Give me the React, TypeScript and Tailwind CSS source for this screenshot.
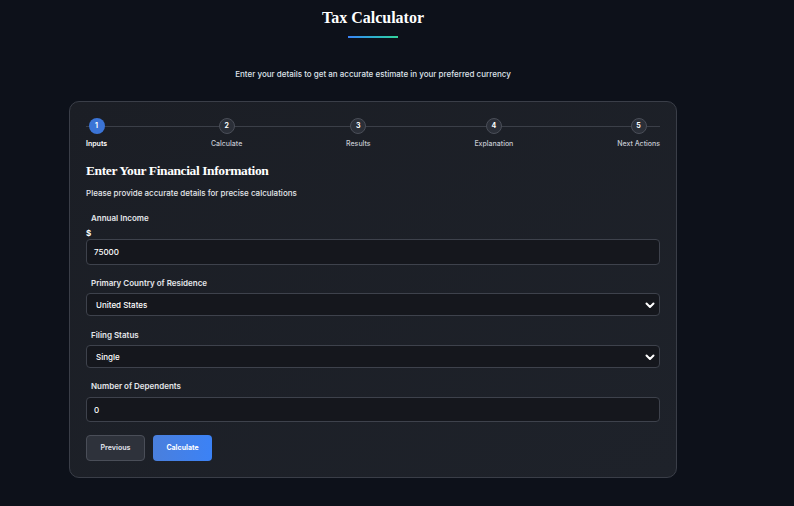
import React from "react";

const steps = ["Inputs", "Calculate", "Results", "Explanation", "Next Actions"];

function Chevron() {
  return (
    <svg width="12" height="12" viewBox="0 0 24 24" fill="none" stroke="#ffffff" strokeWidth="4" strokeLinecap="round" strokeLinejoin="round">
      <polyline points="5 9 12 16 19 9" />
    </svg>
  );
}

export default function App() {
  return (
    <div className="min-h-[506px] w-full bg-[#0d111a] text-white" style={{ fontFamily: "Inter, 'Noto Sans', sans-serif" }}>
      <div className="ml-[69px] w-[608px] flex flex-col items-center pt-[8px]">
        <h1 className="text-[16px] leading-[20px] font-bold text-white" style={{ fontFamily: "'Liberation Serif', serif" }}>
          Tax Calculator
        </h1>
        <div className="mt-[8px] h-[2px] w-[50px] bg-gradient-to-r from-[#3b82f6] to-[#34d399]" />
        <p className="mt-[30px] text-[8px] leading-[12px] text-[#dfe3ea] font-medium">
          Enter your details to get an accurate estimate in your preferred currency
        </p>
        <div className="mt-[21px] w-full rounded-[10px] border border-[#3a3e48] bg-gradient-to-br from-[#1b1e25] to-[#1e222a] px-4 pt-[16px] pb-[16px]">
          <div className="relative flex justify-between items-start">
            <div className="absolute left-0 right-0 top-[8px] h-px bg-[#3b3f48]" />
            {steps.map((s, i) => (
              <div key={s} className="relative flex flex-col items-center">
                <div
                  className={
                    i === 0
                      ? "w-[16px] h-[16px] rounded-full bg-[#3b74d6] flex items-center justify-center text-[7px] font-bold text-white"
                      : "w-[16px] h-[16px] rounded-full bg-[#2b2f38] border border-[#4a4e58] flex items-center justify-center text-[7px] font-bold text-white"
                  }
                >
                  {i + 1}
                </div>
                <span className={i === 0 ? "mt-[5px] text-[7px] leading-[10px] font-semibold text-white" : "mt-[5px] text-[7px] leading-[10px] font-medium text-[#c4c8d0]"}>
                  {s}
                </span>
              </div>
            ))}
          </div>

          <h2 className="mt-[13px] text-[13.5px] leading-[18px] font-bold text-white tracking-[-0.4px]" style={{ fontFamily: "'Liberation Serif', serif" }}>
            Enter Your Financial Information
          </h2>
          <p className="mt-[7px] text-[8px] leading-[12px] text-[#e5e7eb] font-medium">
            Please provide accurate details for precise calculations
          </p>

          <div className="mt-[13px] pl-[5px] text-[8px] leading-[12px] font-semibold text-[#e5e7eb]">Annual Income</div>
          <div className="mt-[4px] text-[8px] leading-[10px] font-bold text-white">$</div>
          <div className="mt-[1px] h-[26px] rounded-[4px] border border-[#3e424c] bg-[#15171d] flex items-center px-[7px] text-[8px] font-medium text-white">
            75000
          </div>

          <div className="mt-[12px] pl-[5px] text-[8px] leading-[12px] font-semibold text-[#e5e7eb]">Primary Country of Residence</div>
          <div className="mt-[4px] h-[23px] rounded-[4px] border border-[#3e424c] bg-[#15171d] flex items-center justify-between pl-[9px] pr-[3px] text-[8px] font-medium text-white">
            <span>United States</span>
            <Chevron />
          </div>

          <div className="mt-[13px] pl-[5px] text-[8px] leading-[12px] font-semibold text-[#e5e7eb]">Filing Status</div>
          <div className="mt-[4px] h-[23px] rounded-[4px] border border-[#3e424c] bg-[#15171d] flex items-center justify-between pl-[9px] pr-[3px] text-[8px] font-medium text-white">
            <span>Single</span>
            <Chevron />
          </div>

          <div className="mt-[12px] pl-[5px] text-[8px] leading-[12px] font-semibold text-[#e5e7eb]">Number of Dependents</div>
          <div className="mt-[5px] h-[25px] rounded-[4px] border border-[#3e424c] bg-[#15171d] flex items-center px-[7px] text-[8px] font-medium text-white">
            0
          </div>

          <div className="mt-[13px] flex gap-[8px]">
            <button className="w-[59px] h-[26px] rounded-[4px] border border-[#4a4e58] bg-[#2e323b] text-[7px] font-bold text-[#d9dce2]">
              Previous
            </button>
            <button className="w-[59px] h-[26px] rounded-[4px] bg-gradient-to-r from-[#4a7fdc] to-[#3b82f6] text-[7px] font-bold text-white">
              Calculate
            </button>
          </div>
        </div>
      </div>
    </div>
  );
}
